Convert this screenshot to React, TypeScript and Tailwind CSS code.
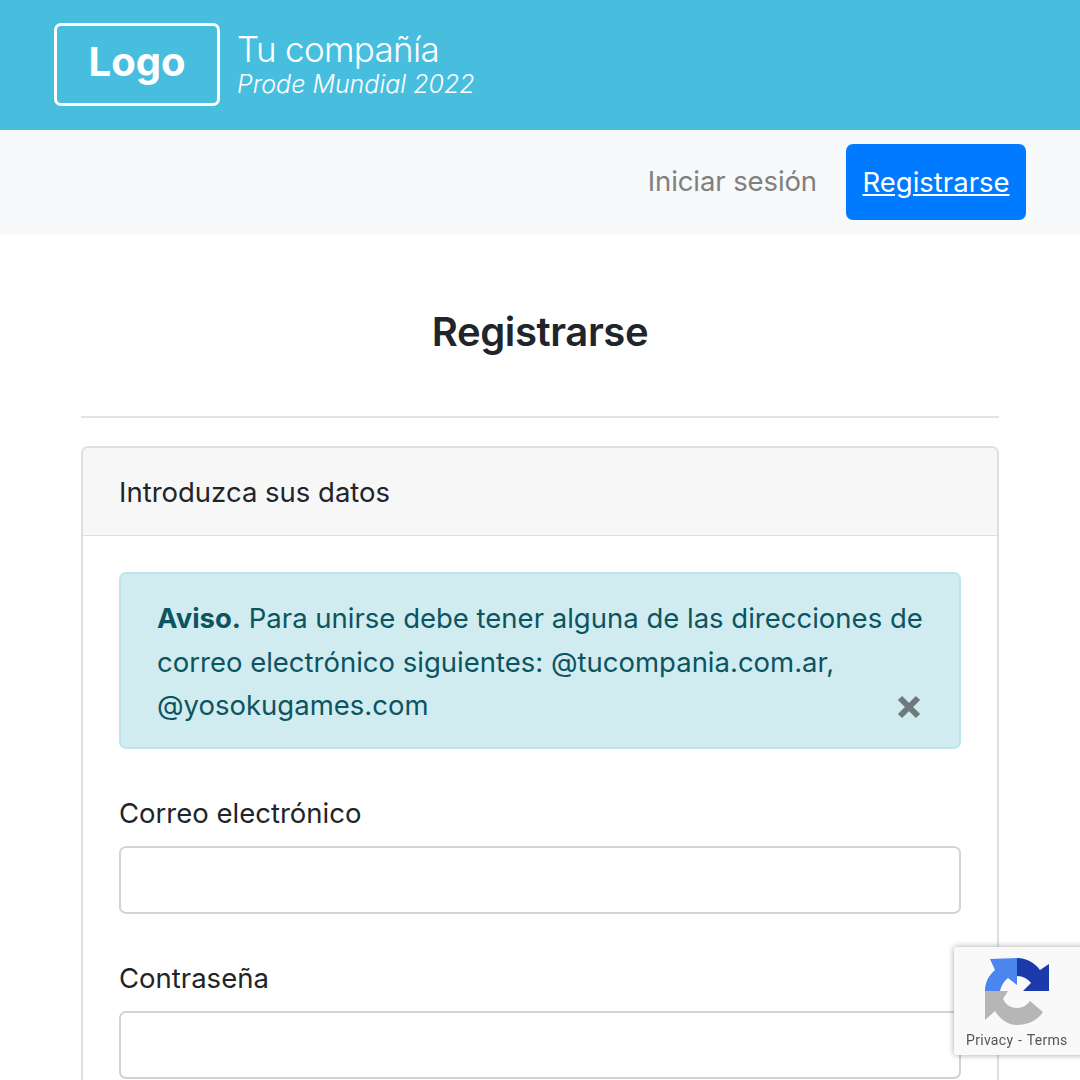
function Field({ label }: { label: string }) {
  return (
    <div className="mb-[45px]">
      <label className="block text-[27.5px] leading-[38px] mb-[14px] text-[#212529]">{label}</label>
      <div className="h-[68px] rounded-[7px] border-2 border-[#ced4da] bg-white" />
    </div>
  );
}

export default function App() {
  return (
    <div className="w-[1080px] h-[1080px] overflow-hidden bg-white relative font-['Inter',sans-serif] text-[#212529]">
      <header className="h-[130px] bg-[#48bedf] flex items-center pl-[54px] pb-[1px] text-white">
        <div className="w-[166px] h-[83px] border-[3px] border-white rounded-[7px] flex items-center justify-center pb-[5px] text-[40px] font-bold">
          Logo
        </div>
        <div className="ml-[17px] flex flex-col">
          <span className="text-[35px] tracking-[-0.7px] leading-[38px] font-light">Tu compañía</span>
          <span className="text-[25px] leading-[32px] italic font-light">Prode Mundial 2022</span>
        </div>
      </header>
      <nav className="h-[104px] bg-[#f8f9fa] flex items-center justify-end pr-[54px]">
        <span className="text-[27.5px] tracking-[-0.1px] text-[#808080] mr-[29px]">Iniciar sesión</span>
        <a className="w-[180px] h-[76px] bg-[#007bff] rounded-[7px] flex items-center justify-center pt-[2px] text-white text-[27.5px] underline">
          Registrarse
        </a>
      </nav>
      <main className="px-[81px]">
        <h1 className="text-[40px] tracking-[-0.4px] leading-[48px] font-semibold text-center pt-[74px] pb-[60px]">Registrarse</h1>
        <hr className="border-t-2 border-[#e2e3e5]" />
        <section className="mt-[28px] border-2 border-[#dfdfdf] rounded-[7px]">
          <div className="h-[88px] bg-[#f7f7f7] border-b border-[#dfdfdf] flex items-center px-[36px] pt-[3px] text-[27.5px] rounded-t-[6px]">
            Introduzca sus datos
          </div>
          <div className="px-[36px] pt-[36px]">
            <div className="relative h-[177px] bg-[#d1ecf1] border-2 border-[#bee5eb] rounded-[7px] text-[#0c5460] text-[27.5px] leading-[43.5px] pl-[36px] pr-[30px] pt-[23px] mb-[45px]">
              <b>Aviso.</b> Para unirse debe tener alguna de las direcciones de correo electrónico siguientes: @tucompania.com.ar, @yosokugames.com
              <svg className="absolute right-[38px] bottom-[28px]" width="24" height="24" viewBox="0 0 24 24">
                <path d="M3 3L21 21M21 3L3 21" stroke="#6c7a7c" strokeWidth="6" />
              </svg>
            </div>
            <Field label="Correo electrónico" />
            <Field label="Contraseña" />
          </div>
        </section>
      </main>
      <div className="fixed left-[954px] top-[947px] w-[140px] h-[108px] bg-[#f9f9f9] rounded-l-[3px] shadow-[0_0_6px_rgba(0,0,0,0.35)] flex flex-col items-start">
        <svg className="ml-[31px] mt-[11px]" width="66" height="68" viewBox="0 0 66 68">
          <path d="M0 33 C0 24 4 17 10 12 L5 1 L32 0 L32 27 L23 20 C19 23 16 28 15 33 Z" fill="#4a86ee" />
          <path d="M32 0 C42 0 50 5 55 12 L64 6 L64 33 L38 33 L46 25 C43 21 38 18 32 18 Z" fill="#1c3aa9" />
          <path d="M0 33 L23 33 L18 41 C21 47 26 50 32 50 C38 50 42 47 45 43 L58 54 C52 63 42 67 32 67 C23 67 15 61 10 53 L0 62 Z" fill="#b6b6b6" />
        </svg>
        <span className="font-['Roboto',sans-serif] text-[14px] leading-[16px] mt-[6px] ml-[12px] text-[#555] tracking-[0.3px] [word-spacing:1px]">
          Privacy - Terms
        </span>
      </div>
    </div>
  );
}
